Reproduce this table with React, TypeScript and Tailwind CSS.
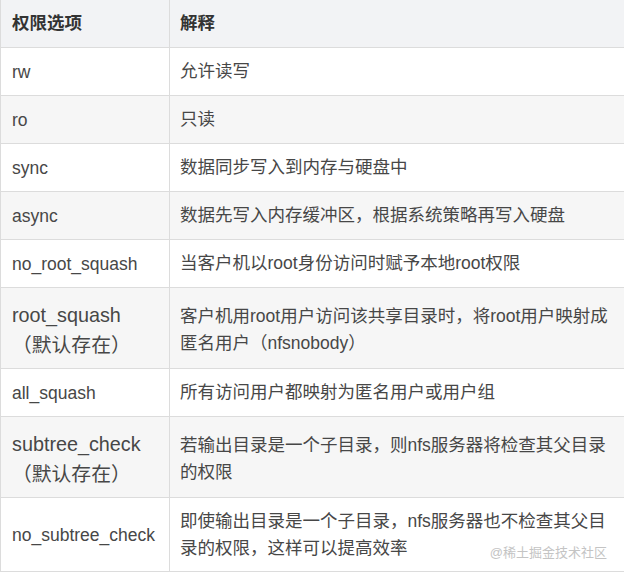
import React from 'react';

type Row = {
    option: string[];
    desc: string[];
    height: string;
    big?: boolean;
};

const rows: Row[] = [
    { option: ['rw'], desc: ['允许读写'], height: 'h-[48px]' },
    { option: ['ro'], desc: ['只读'], height: 'h-[48px]' },
    { option: ['sync'], desc: ['数据同步写入到内存与硬盘中'], height: 'h-[48px]' },
    { option: ['async'], desc: ['数据先写入内存缓冲区，根据系统策略再写入硬盘'], height: 'h-[48px]' },
    { option: ['no_root_squash'], desc: ['当客户机以root身份访问时赋予本地root权限'], height: 'h-[48px]' },
    {
        option: ['root_squash', '（默认存在）'],
        desc: ['客户机用root用户访问该共享目录时，将root用户映射成', '匿名用户（nfsnobody）'],
        height: 'h-[81px]',
        big: true
    },
    { option: ['all_squash'], desc: ['所有访问用户都映射为匿名用户或用户组'], height: 'h-[48px]' },
    {
        option: ['subtree_check', '（默认存在）'],
        desc: ['若输出目录是一个子目录，则nfs服务器将检查其父目录', '的权限'],
        height: 'h-[81px]',
        big: true
    },
    {
        option: ['no_subtree_check'],
        desc: ['即使输出目录是一个子目录，nfs服务器也不检查其父目', '录的权限，这样可以提高效率'],
        height: 'h-[74px]'
    }
];

const font = { fontFamily: '"Liberation Sans", "Noto Sans CJK SC", sans-serif' };

export default function App() {
    return (
        <div className="relative w-[624px] h-[576px] bg-white overflow-hidden" style={font}>
            <div className="w-[640px] border-l border-[#dcdcdc]">
                {/* header */}
                <div className="grid grid-cols-[169px_1fr] h-[48px] bg-[#f2f3f5] border-b border-[#dcdcdc] text-[#333] font-bold text-[17.5px]">
                    <div className="flex items-center pl-[11px] border-r border-[#dcdcdc]">权限选项</div>
                    <div className="flex items-center pl-[10px]">解释</div>
                </div>

                {rows.map((row, i) => (
                    <div
                        key={row.option[0]}
                        className={`grid grid-cols-[169px_1fr] ${row.height} border-b border-[#dcdcdc] text-[#474747] ${
                            i % 2 === 1 ? 'bg-[#f6f6f6]' : 'bg-white'
                        }`}
                    >
                        <div
                            className={`flex flex-col justify-center pl-[11px] border-r border-[#dcdcdc] whitespace-nowrap ${
                                row.big ? 'text-[19.8px] leading-[30px] pt-[3px]' : 'text-[17.5px] leading-[26px]'
                            }`}
                        >
                            {row.option.map(line => (
                                <span key={line}>{line}</span>
                            ))}
                        </div>
                        <div
                            className={`flex flex-col justify-center pl-[10px] text-[17.5px] leading-[27px] whitespace-nowrap ${
                                row.big ? 'pt-[3px]' : ''
                            }`}
                        >
                            {row.desc.map(line => (
                                <span key={line}>{line}</span>
                            ))}
                        </div>
                    </div>
                ))}
            </div>

            <span className="absolute right-[17px] bottom-[14px] text-[13px] text-[#c4c4c4]">@稀土掘金技术社区</span>
        </div>
    );
}
